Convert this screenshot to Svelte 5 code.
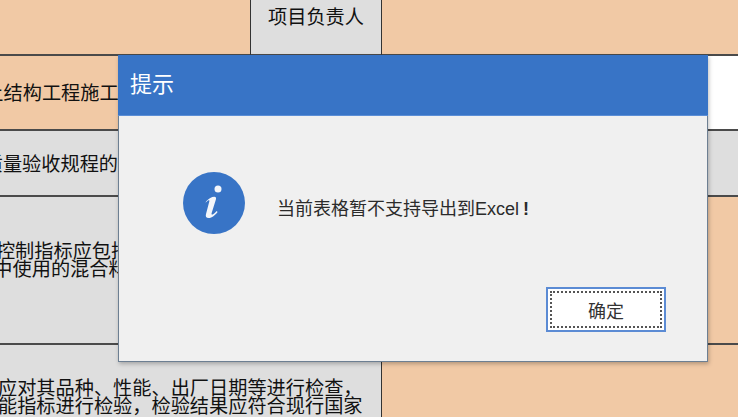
<script lang="ts">
	const message = '当前表格暂不支持导出到Excel';
</script>

<div class="sheet">
	<div class="cell orange"></div>
	<div class="cell gray owner">项目负责人</div>
	<div class="cell orange last"></div>

	<div class="cell orange wide standard">混凝土结构工程施工质量验收规范</div>
	<div class="cell white last"></div>

	<div class="cell gray full code">工程施工质量验收规程的规定</div>

	<div class="cell gray wide control">
		<p>原材料质量控制指标应包括</p>
		<p>施工中使用的混合料</p>
	</div>
	<div class="cell orange last"></div>

	<div class="cell gray wide inspect">
		<p>应对其品种、性能、出厂日期等进行检查，</p>
		<p>能指标进行检验，检验结果应符合现行国家</p>
		<p class="third">标准的规定和设计要求，不合格的不得使用</p>
	</div>
	<div class="cell orange last"></div>
</div>

<div class="dialog" role="dialog" aria-label="提示">
	<header class="title">提示</header>
	<div class="content">
		<svg class="info" viewBox="0 0 62 62" aria-hidden="true">
			<circle cx="31" cy="31" r="31" fill="#3874c6" />
			<circle cx="35" cy="17" r="3.5" fill="#f4f6fa" />
			<path
				d="M23 29.500c2.800-3 5.800-4.800 8.300-4.800 1.600 0 2.100 1 1.600 2.800l-4.300 13.800c-.3 1.200.3 1.600 1.200 1.100 1.300-.7 2.700-1.900 3.900-3.300l.9.8c-2.400 3.300-5.800 6-8.900 6-2.500 0-3.400-1.500-2.700-4l3.300-12.400c.3-1.200-.3-1.500-1.200-.9-.8.5-1.800 1.300-2.500 2.200z"
				fill="#f4f6fa"
			/>
		</svg>
		<p class="message">{message}<span class="bang">!</span></p>
	</div>
	<footer class="actions">
		<button class="ok"><span class="focus">确定</span></button>
	</footer>
</div>

<style>
	:global(body) {
		margin: 0;
		overflow: hidden;
	}

	.sheet {
		display: grid;
		grid-template-columns: 251px 131px 356px;
		grid-template-rows: 56px 75px 66px 148px 74px;
		width: 738px;
		height: 417px;
		overflow: hidden;
		font-family: 'Noto Sans CJK SC', sans-serif;
		font-size: 19.2px;
		line-height: 18.4px;
		color: #111;
	}

	.cell {
		box-sizing: border-box;
		border-right: 1px solid #333;
		border-bottom: 2px solid #4a4a4a;
		overflow: hidden;
		white-space: nowrap;
	}

	.cell p {
		margin: 0;
	}

	.last {
		border-right: 0;
	}

	.orange {
		background: #f1c9a5;
	}

	.gray {
		background: #dedede;
	}

	.white {
		background: #fff;
	}

	.wide {
		grid-column: span 2;
	}

	.full {
		grid-column: span 3;
		border-right: 0;
	}

	.owner {
		display: flex;
		align-items: center;
		justify-content: center;
		padding-bottom: 22px;
	}

	.standard {
		padding: 27px 0 0;
		text-indent: -54px;
	}

	.code {
		padding-top: 23px;
		text-indent: -93px;
	}

	.control {
		padding-top: 44px;
		text-indent: -100px;
	}

	.control p + p {
		text-indent: -45px;
	}

	.inspect {
		padding-top: 33px;
		text-indent: -2px;
	}

	.inspect .third {
		margin-top: 2px;
		padding-left: 76px;
	}

	.dialog {
		position: absolute;
		left: 118px;
		top: 55px;
		box-sizing: border-box;
		display: flex;
		flex-direction: column;
		width: 590px;
		height: 307px;
		background: #f0f0f0;
		border: 1px solid #6d7f92;
		border-top: 0;
		box-shadow: 1px 2px 4px rgba(0, 0, 0, 0.25);
		font-family: 'Liberation Sans', 'Noto Sans CJK SC', sans-serif;
	}

	.title {
		box-sizing: border-box;
		height: 61px;
		margin: 0 -1px;
		padding: 14px 12px 0;
		background: #3874c6;
		border-bottom: 1px solid #5b8ed6;
		color: #fff;
		font-size: 22px;
		line-height: 32px;
	}

	.content {
		display: flex;
		align-items: center;
		gap: 32px;
		padding: 56px 0 0 64px;
	}

	.info {
		width: 62px;
		height: 62px;
		flex: none;
	}

	.message {
		margin: 12px 0 0;
		font-size: 18px;
		line-height: 24px;
		color: #2b2b2b;
	}

	.bang {
		margin-left: 4px;
		font-weight: 700;
	}

	.actions {
		display: flex;
		justify-content: flex-end;
		margin-top: auto;
		padding: 0 41px 29px 0;
	}

	.ok {
		box-sizing: border-box;
		width: 120px;
		height: 45px;
		padding: 2px;
		background: #fff;
		border: 2px solid #5b8bd4;
		font-family: inherit;
		font-size: 18px;
		color: #333;
	}

	.focus {
		display: flex;
		align-items: center;
		justify-content: center;
		box-sizing: border-box;
		height: 100%;
		border: 2px dotted #555;
	}
</style>
